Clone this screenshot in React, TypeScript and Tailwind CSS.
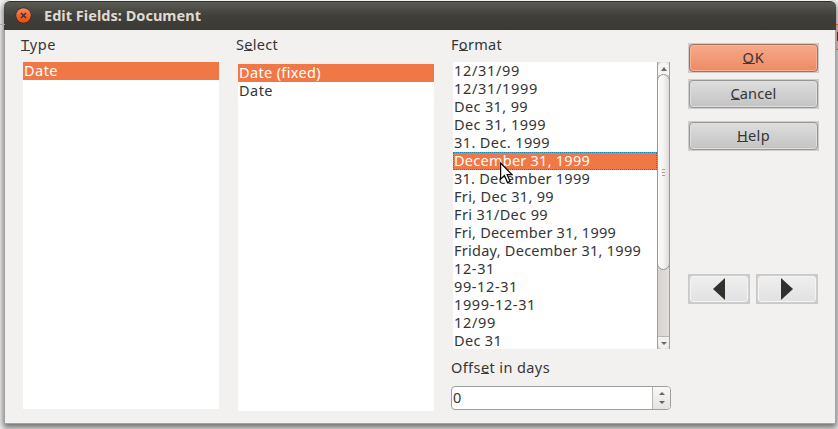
import { useLayoutEffect, useRef, useState } from "react";
import type { ReactNode } from "react";

/** A single line of text whose tracking is computed so that it fills `width` pixels. */
function Label({ width, children, className = "" }: { width: number; children: ReactNode; className?: string }) {
  const ref = useRef<HTMLSpanElement>(null);
  const [spacing, setSpacing] = useState(0);
  useLayoutEffect(() => {
    const el = ref.current;
    if (!el) return;
    const previous = el.style.letterSpacing;
    el.style.letterSpacing = "0px";
    const natural = el.getBoundingClientRect().width;
    el.style.letterSpacing = previous;
    setSpacing((width - natural) / (el.textContent?.length || 1));
  }, [width]);
  return (
    <span ref={ref} className={`block w-max whitespace-pre ${className}`} style={{ letterSpacing: `${spacing}px` }}>
      {children}
    </span>
  );
}

function Key({ children }: { children: ReactNode }) {
  return <span className="inline-block h-[15px] border-b border-[#3c3c3c] align-top leading-[16px]">{children}</span>;
}

const formats: [string, number][] = [
  ["12/31/99", 66],
  ["12/31/1999", 84],
  ["Dec 31, 99", 74],
  ["Dec 31, 1999", 92],
  ["31. Dec. 1999", 96],
  ["December 31, 1999", 136],
  ["31. December 1999", 136],
  ["Fri, Dec 31, 99", 100],
  ["Fri 31/Dec 99", 94],
  ["Fri, December 31, 1999", 162],
  ["Friday, December 31, 1999", 187],
  ["12-31", 41],
  ["99-12-31", 64],
  ["1999-12-31", 82],
  ["12/99", 42],
  ["Dec 31", 48],
];

function TitleBar() {
  return (
    <header className="flex h-[29px] shrink-0 items-center rounded-t-[6px] border-t border-[#32312d] bg-linear-to-b from-[#5b5a53] via-[#403f3a] via-50% to-[#3b3a35] pl-[11px]">
      <svg width="18" height="18" viewBox="0 0 18 18" className="shrink-0">
        <defs>
          <linearGradient id="close" x1="0" y1="0" x2="0" y2="1">
            <stop offset="0" stopColor="#f58a63" />
            <stop offset=".5" stopColor="#ef6435" />
            <stop offset="1" stopColor="#e24e0c" />
          </linearGradient>
        </defs>
        <circle cx="8.5" cy="8.5" r="8" fill="#302f2b" />
        <circle cx="8.5" cy="8.5" r="7.3" fill="url(#close)" />
        <path d="M6 6l5 5M11 6l-5 5" stroke="#443027" strokeWidth="1.5" />
      </svg>
      <Label width={157} className="mb-[2px] ml-[11px] text-[14.5px] leading-[20px] font-bold text-[#dfdbd2]">
        Edit Fields: Document
      </Label>
    </header>
  );
}

function PushButton({ children, width, primary = false }: { children: ReactNode; width: number; primary?: boolean }) {
  return (
    <div className="h-[30px] w-[131px] bg-[#cdccca] p-px">
      <button
        className={
          primary
            ? "flex h-[28px] w-[129px] items-center justify-center rounded-[4px] border border-[#a5705a] bg-linear-to-b from-[#f7a98b] to-[#ed8a64] pb-[2px] shadow-[inset_0_0_0_1px_#f8b298]"
            : "flex h-[28px] w-[129px] items-center justify-center rounded-[4px] border border-[#979797] bg-linear-to-b from-[#dedede] to-[#c3c3c3] pb-[2px] shadow-[inset_0_0_0_1px_#dedede]"
        }
      >
        <Label width={width} className="leading-[16px]">{children}</Label>
      </button>
    </div>
  );
}

function ArrowButton({ dir }: { dir: "left" | "right" }) {
  return (
    <div className="h-[30px] w-[62px] bg-[#cbcac8] p-px">
      <button className="flex h-[28px] w-[60px] items-center justify-center rounded-[4px] border border-[#cfcfcf] bg-linear-to-b from-[#efefef] to-[#e2e2e2] shadow-[inset_0_0_0_1px_#f4f4f4]">
        <svg width="12" height="22" viewBox="0 0 12 22">
          <path d={dir === "left" ? "M12 0v22L0 11z" : "M0 0v22L12 11z"} fill="#30302c" />
        </svg>
      </button>
    </div>
  );
}

function ScrollBar() {
  return (
    <div className="flex h-[287px] w-[13px] flex-col border-x border-[#a3a19e] bg-linear-to-r from-[#d5d2d0] to-[#e2dfdd]">
      <div className="flex h-[13px] items-center justify-center rounded-t-[6px] bg-[#f5f4f3]">
        <svg width="6" height="4" viewBox="0 0 6 4"><path d="M0 4L3 0l3 4z" fill="#6b6a67" /></svg>
      </div>
      <div className="-mx-px -mt-px flex h-[196px] flex-col items-center justify-center gap-[2px] rounded-full border border-[#999795] bg-linear-to-r from-[#fafafa] via-[#f4f3f2] to-[#dedcda]">
        <i className="h-px w-[3px] bg-[#a09e9b]" />
        <i className="h-px w-[3px] bg-[#a09e9b]" />
        <i className="h-px w-[3px] bg-[#a09e9b]" />
      </div>
      <div className="grow" />
      <div className="flex h-[13px] items-center justify-center rounded-b-[6px] border-t border-[#b9b6b3] bg-[#f1f0ef]">
        <svg width="6" height="3" viewBox="0 0 6 3"><path d="M0 0h6L3 3z" fill="#6b6a67" /></svg>
      </div>
    </div>
  );
}

export default function App() {
  return (
    <div className="relative h-[429px] w-[838px] overflow-hidden bg-[#f2f3f3] font-['Noto_Sans','Open_Sans',sans-serif] text-[14.5px] leading-[16px] text-[#353535]">
      <div className="absolute top-[24px] left-0 h-px w-[5px] bg-[#a9a9a9]" />
      <div className="ml-[4px] flex h-[424px] w-[832px] flex-col rounded-t-[7px] pt-px shadow-[0_3px_6px_1px_#707070]">
        <TitleBar />
        <main className="flex grow border-x border-b border-[#a3a39f] bg-[#f2f1f0] pl-[16px]">
          <section className="w-[215px] pt-[6px]">
            <Label width={35} className="h-[16px]"><Key>T</Key>ype</Label>
            <div className="mt-[10px] ml-[2px] h-[347px] w-[196px] bg-white">
              <div className="h-[18px] bg-[#f07746] pl-px text-white"><Label width={34}>Date</Label></div>
            </div>
          </section>
          <section className="w-[215px] pt-[6px]">
            <Label width={42} className="h-[16px]">S<Key>e</Key>lect</Label>
            <div className="mt-[12px] ml-[2px] h-[347px] w-[196px] bg-white">
              <div className="h-[18px] bg-[#f07746] pl-px text-white"><Label width={82}>Date (fixed)</Label></div>
              <div className="h-[18px] pl-px"><Label width={34}>Date</Label></div>
            </div>
          </section>
          <section className="w-[237px] pt-[6px]">
            <Label width={51} className="h-[16px]">F<Key>o</Key>rmat</Label>
            <div className="mt-[10px] ml-[2px] flex h-[287px] w-[217px] bg-white">
              <div className="w-[204px]">
                {formats.map(([text, width], i) => (
                  <div
                    key={text}
                    className={
                      i === 5
                        ? "h-[18px] bg-[#f07746] pl-px text-white outline-1 -outline-offset-1 outline-dotted outline-[#0f88b9]"
                        : "h-[18px] pl-px"
                    }
                  >
                    <Label width={width}>{text}</Label>
                  </div>
                ))}
              </div>
              <ScrollBar />
            </div>
            <Label width={99} className="mt-[10px] h-[16px]">Offs<Key>e</Key>t in days</Label>
            <div className="mt-[11px] flex h-[24px] w-[220px] rounded-[4px] border border-[#a09f9c] bg-white">
              <div className="grow pt-[2px] pl-px">0</div>
              <div className="flex w-[18px] flex-col items-center justify-center gap-[6px] rounded-r-[3px] border-l border-[#b8b6b3] bg-linear-to-b from-[#f8f8f7] to-[#e4e3e1]">
                <svg width="6" height="3" viewBox="0 0 6 3"><path d="M0 3L3 0l3 3z" fill="#63625f" /></svg>
                <svg width="6" height="3" viewBox="0 0 6 3"><path d="M0 0h6L3 3z" fill="#63625f" /></svg>
              </div>
            </div>
          </section>
          <aside className="flex w-[131px] flex-col pt-[13px]">
            <PushButton width={22} primary><Key>O</Key>K</PushButton>
            <div className="mt-[6px]"><PushButton width={46}><Key>C</Key>ancel</PushButton></div>
            <div className="mt-[12px]"><PushButton width={33}><Key>H</Key>elp</PushButton></div>
            <div className="mt-[123px] flex gap-[6px]">
              <ArrowButton dir="left" />
              <ArrowButton dir="right" />
            </div>
          </aside>
        </main>
      </div>
      <div className="absolute top-[24px] right-0 h-[26px] w-[2px] border-y border-[#d9531e] bg-[#b79c90]">
        <div className="mt-[7px] ml-px h-[9px] w-px bg-[#4d3020]" />
      </div>
      <svg className="absolute top-[162px] left-[500px]" width="14" height="22" viewBox="0 0 14 22">
        <path d="M.6 1v16.2l3.8-3.6 3.2 7 2.6-1.2-3.1-6.7h5z" fill="white" stroke="black" strokeWidth="1.2" />
      </svg>
    </div>
  );
}
